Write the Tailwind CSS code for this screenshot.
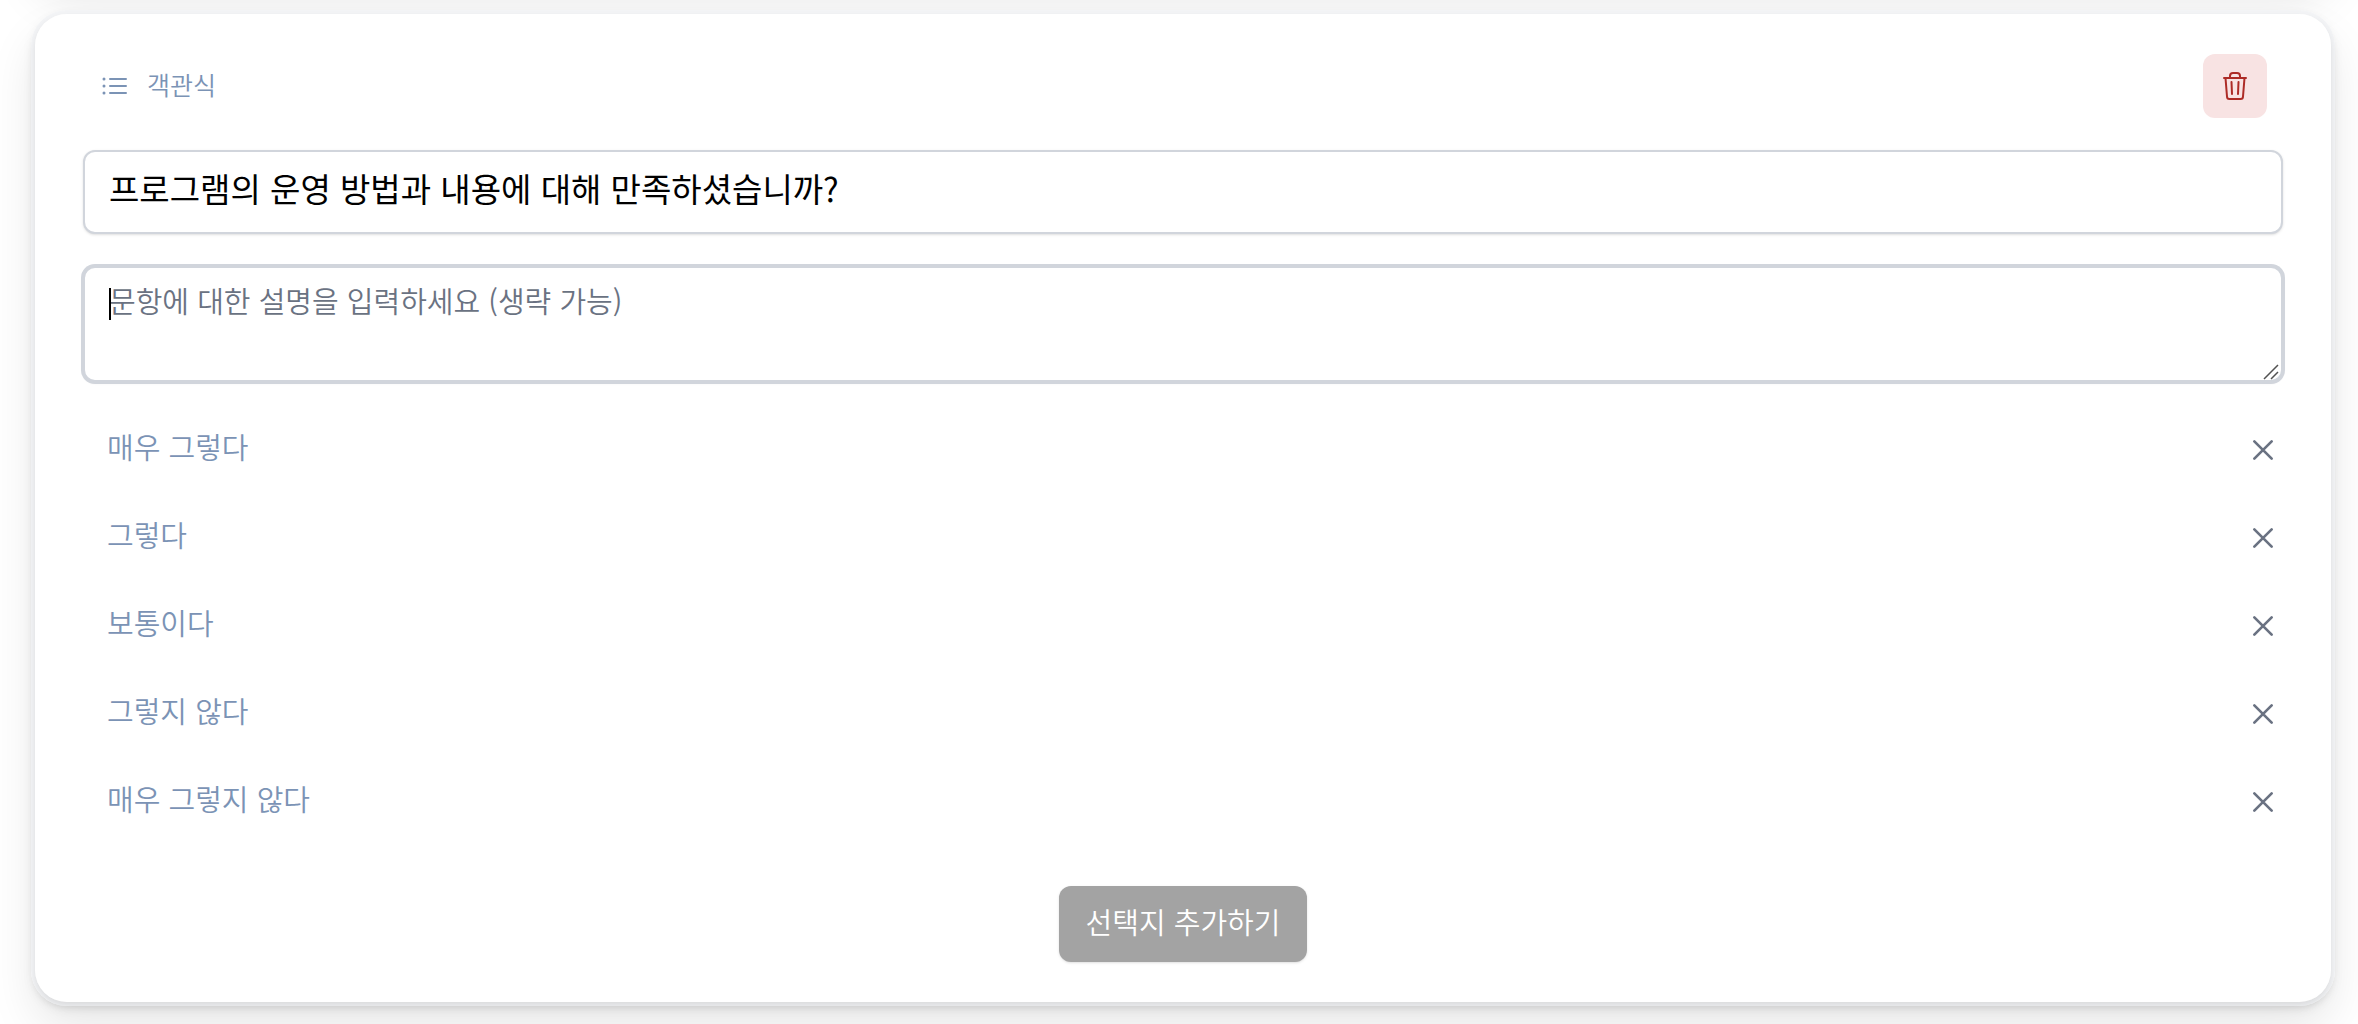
<!DOCTYPE html>
<html lang="ko">
<head>
<meta charset="utf-8">
<title>설문 문항 편집</title>
<script src="https://cdn.jsdelivr.net/npm/@tailwindcss/browser@4"></script>
</head>
<body class="h-screen overflow-hidden bg-white pl-[31px] pr-[23px] font-['Noto_Sans_CJK_KR',sans-serif] font-[350]">
<main class="-mt-[182px] flex flex-col gap-8">
  <!-- previous question, scrolled out of view -->
  <section class="h-40 shrink-0 rounded-[36px] border-4 border-gray-100 bg-white shadow-[0_24px_48px_-4px_rgb(0_0_0/0.1),0_4px_12px_-2px_rgb(0_0_0/0.08)]"></section>

  <section class="rounded-[36px] border-4 border-gray-100 shadow-[0_24px_48px_-4px_rgb(0_0_0/0.1),0_4px_12px_-2px_rgb(0_0_0/0.08)]">
    <div class="flex flex-col rounded-[32px] bg-white px-12 py-10 shadow-[0_4px_8px_-1px_rgb(0_0_0/0.12)]">
      <header class="flex items-center justify-between px-4">
        <div class="flex items-center gap-4 text-[#7b93b5]">
          <svg class="size-8" viewBox="0 0 24 24" fill="none" stroke="currentColor" stroke-width="1.5" stroke-linecap="round" stroke-linejoin="round" aria-hidden="true"><path d="M8.25 6.75h12M8.25 12h12m-12 5.25h12M3.75 6.75h.007v.008H3.75V6.75Zm.375 0a.375.375 0 1 1-.75 0 .375.375 0 0 1 .75 0ZM3.75 12h.007v.008H3.75V12Zm.375 0a.375.375 0 1 1-.75 0 .375.375 0 0 1 .75 0Zm-.375 5.25h.007v.008H3.75v-.008Zm.375 0a.375.375 0 1 1-.75 0 .375.375 0 0 1 .75 0Z"/></svg>
          <span class="pb-1 text-[25px] leading-8">객관식</span>
        </div>
        <button type="button" aria-label="문항 삭제" class="flex size-16 items-center justify-center rounded-xl bg-[#f8e3e3] text-[#ad2b26]">
          <svg class="size-8" viewBox="0 0 32 32" fill="none" stroke="currentColor" stroke-width="2" stroke-linecap="round" stroke-linejoin="round" aria-hidden="true"><path d="M5 8h22M6.500 8l1.500 18.500a2.500 2.500 0 0 0 2.500 2.500h11a2.500 2.500 0 0 0 2.500-2.500L25.500 8M11 8V6a3 3 0 0 1 3-3h4a3 3 0 0 1 3 3v2M12.500 12l.5 12M19.500 12l-.5 12"/></svg>
        </button>
      </header>

      <input type="text" aria-label="문항 제목" value="프로그램의 운영 방법과 내용에 대해 만족하셨습니까?" class="mt-8 h-[84px] w-full rounded-xl border-2 border-gray-300 bg-white px-6 pb-2 text-[33px] font-normal text-black shadow-sm outline-none">

      <div class="relative mt-8 flex">
        <textarea aria-label="문항 설명" placeholder="문항에 대한 설명을 입력하세요 (생략 가능)" class="h-[116px] w-full resize-none rounded-xl border-2 border-gray-300 bg-white px-6 py-3 text-[29px] leading-10 shadow-sm ring-2 ring-gray-300 outline-none placeholder:text-gray-500"></textarea>
        <span class="absolute left-[26px] top-[22px] h-8 w-0.5 bg-black"></span>
        <svg class="absolute bottom-0.5 right-1 size-4 text-neutral-600" viewBox="0 0 16 16" fill="none" stroke="currentColor" stroke-width="1.500" aria-hidden="true"><path d="M1 15 15 1M8 15l7-7"/></svg>
      </div>

      <ul class="mt-6 text-[29px] text-[#7b93b5]">
        <li class="flex h-[88px] items-center pr-1">
          <input type="text" aria-label="선택지 1" value="매우 그렇다" class="h-16 min-w-0 flex-1 bg-transparent px-6 pb-2 outline-none">
          <button type="button" aria-label="선택지 1 삭제" class="text-gray-500"><svg class="size-8" viewBox="0 0 24 24" fill="none" stroke="currentColor" stroke-width="2" stroke-linecap="round"><path d="m5.500 5.500 13 13m0-13-13 13"/></svg></button>
        </li>
        <li class="flex h-[88px] items-center pr-1">
          <input type="text" aria-label="선택지 2" value="그렇다" class="h-16 min-w-0 flex-1 bg-transparent px-6 pb-2 outline-none">
          <button type="button" aria-label="선택지 2 삭제" class="text-gray-500"><svg class="size-8" viewBox="0 0 24 24" fill="none" stroke="currentColor" stroke-width="2" stroke-linecap="round"><path d="m5.500 5.500 13 13m0-13-13 13"/></svg></button>
        </li>
        <li class="flex h-[88px] items-center pr-1">
          <input type="text" aria-label="선택지 3" value="보통이다" class="h-16 min-w-0 flex-1 bg-transparent px-6 pb-2 outline-none">
          <button type="button" aria-label="선택지 3 삭제" class="text-gray-500"><svg class="size-8" viewBox="0 0 24 24" fill="none" stroke="currentColor" stroke-width="2" stroke-linecap="round"><path d="m5.500 5.500 13 13m0-13-13 13"/></svg></button>
        </li>
        <li class="flex h-[88px] items-center pr-1">
          <input type="text" aria-label="선택지 4" value="그렇지 않다" class="h-16 min-w-0 flex-1 bg-transparent px-6 pb-2 outline-none">
          <button type="button" aria-label="선택지 4 삭제" class="text-gray-500"><svg class="size-8" viewBox="0 0 24 24" fill="none" stroke="currentColor" stroke-width="2" stroke-linecap="round"><path d="m5.500 5.500 13 13m0-13-13 13"/></svg></button>
        </li>
        <li class="flex h-[88px] items-center pr-1">
          <input type="text" aria-label="선택지 5" value="매우 그렇지 않다" class="h-16 min-w-0 flex-1 bg-transparent px-6 pb-2 outline-none">
          <button type="button" aria-label="선택지 5 삭제" class="text-gray-500"><svg class="size-8" viewBox="0 0 24 24" fill="none" stroke="currentColor" stroke-width="2" stroke-linecap="round"><path d="m5.500 5.500 13 13m0-13-13 13"/></svg></button>
        </li>
      </ul>

      <button type="button" class="mt-10 h-[76px] self-center rounded-xl bg-[#a3a3a3] px-[27px] pb-1 text-[29px] text-white shadow-sm">선택지 추가하기</button>
    </div>
  </section>
</main>
</body>
</html>
